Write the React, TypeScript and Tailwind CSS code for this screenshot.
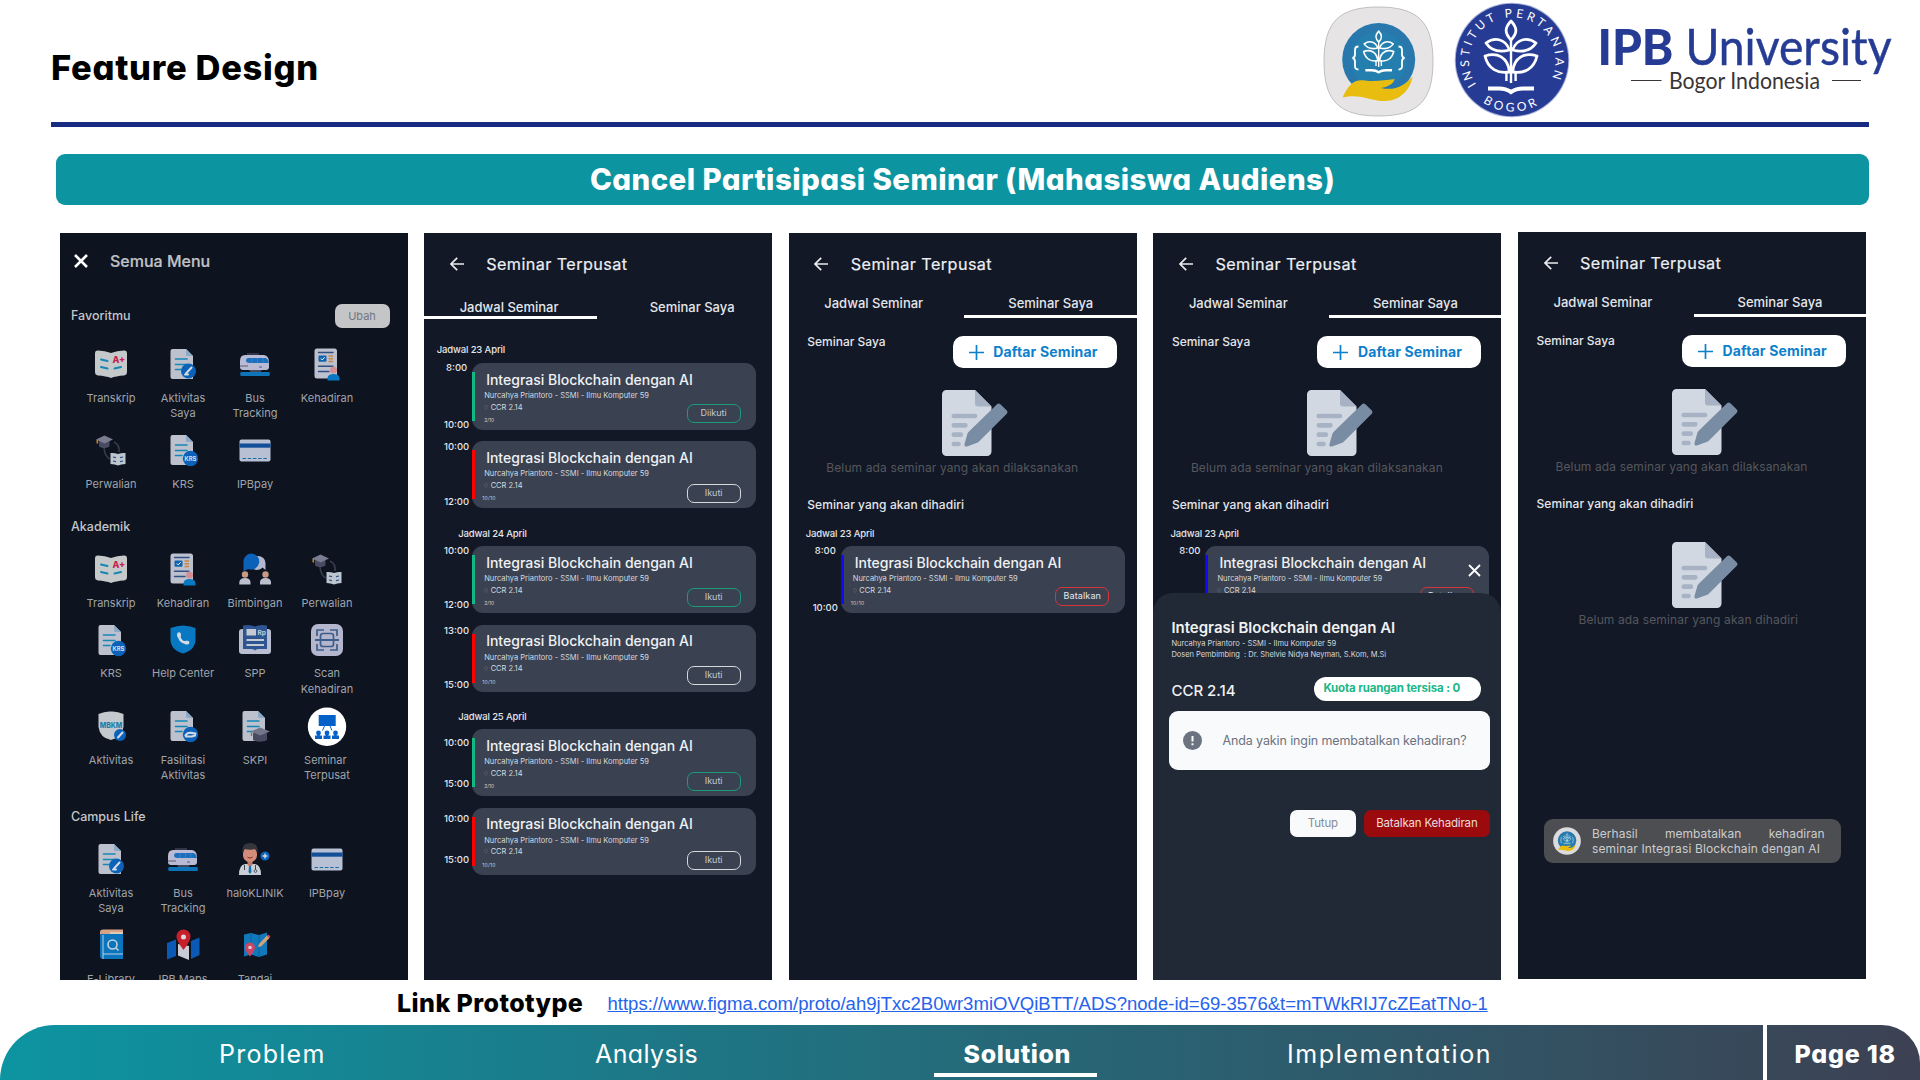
import type { ReactNode } from 'react';

/* ---------- logos ---------- */

function Plant() {
  return (
    <g fill="none" stroke="#fff" strokeWidth={2.8} strokeLinejoin="round">
      <path d="M0-36C-6.500-29-6.500-24 0-17C6.500-24 6.500-29 0-36Z" />
      <path d="M-25-14C-17-20-6-19-1.500-7C-9-5-19-5-25-14Z" />
      <path d="M25-14C17-20 6-19 1.500-7C9-5 19-5 25-14Z" />
      <path d="M-26-1C-14-5-3 0-1.500 15C-13 17-23 12-26-1Z" />
      <path d="M26-1C14-5 3 0 1.500 15C13 17 23 12 26-1Z" />
      <path d="M0-17V26M-4.600 14V24M4.600 14V24" strokeWidth={2.4} />
      <path d="M-23 31.500H-12Q-5 31.500 0 35Q5 31.500 12 31.500H23" strokeWidth={4} strokeLinejoin="miter" />
    </g>
  );
}

function AppEmblem() {
  return (
    <svg className="h-[111px] w-[111px]" viewBox="0 0 111 111">
      <path
        d="M55.500 1C95 1 110 16 110 55.500C110 95 95 110 55.500 110C16 110 1 95 1 55.500C1 16 16 1 55.500 1Z"
        fill="#e6e4e5"
        stroke="#b3b2b4"
        strokeWidth={0.8}
      />
      <EmblemCore />
    </svg>
  );
}

function EmblemCore() {
  return (
    <>
      <circle cx={55.700} cy={53.500} r={36.500} fill="#2878ad" />
      <circle cx={55.700} cy={53.500} r={28} fill="#1f85b0" opacity={0.5} />
      <g transform="translate(55.700 46) scale(.58)">
        <Plant />
      </g>
      <g fill="none" stroke="#fff" strokeWidth={1.8}>
        <path d="M35.500 40.500q-3.500 0-3.500 3.500v4.500q0 3-2.500 3.500q2.500.5 2.500 3.500v4.500q0 3.500 3.500 3.500" />
        <path d="M75.500 40.500q3.500 0 3.500 3.500v4.500q0 3 2.500 3.500q-2.500.5-2.500 3.500v4.500q0 3.500-3.500 3.500" />
      </g>
      <path
        d="M19.500 91.500C26 78 31 73 42 74.500C52 76 62 74 71.500 73C71 78 64 81 58 82C72 85 81 80 89.500 70.500C88 82 78 95 62 95C48 95.500 38 87 19.500 91.500Z"
        fill="#e9bd10"
      />
    </>
  );
}

function InstituteSeal() {
  return (
    <svg className="h-[116px] w-[116px]" viewBox="-58 -58 116 116">
      <defs>
        <path id="sealTop" d="M-35.800 24.500A43.300 43.300 0 1 1 38.600 20.500" />
        <path id="sealBottom" d="M-29 42.500A51.500 51.500 0 0 0 28 43.500" />
      </defs>
      <circle r={57.300} fill="#a9b2db" />
      <circle r={56.300} fill="#263c94" />
      <g transform="translate(-1 -3)">
        <Plant />
      </g>
      <g fill="#fff" fontFamily="Lato, sans-serif" fontSize={12}>
        <text textLength={179} lengthAdjust="spacing">
          <textPath href="#sealTop" textLength={179}>INSTITUT PERTANIAN</textPath>
        </text>
        <text textLength={57}>
          <textPath href="#sealBottom" textLength={57}>BOGOR</textPath>
        </text>
      </g>
    </svg>
  );
}

function UniversityWordmark() {
  return (
    <svg className="h-[82px] w-[300px] overflow-visible" viewBox="0 0 300 82">
      <g fill="#263c94" fontFamily="Lato, sans-serif" fontSize={50}>
        <text x={1.500} y={45} fontWeight={900} textLength={76} lengthAdjust="spacingAndGlyphs">IPB</text>
        <text x={89.500} y={45} textLength={206} lengthAdjust="spacingAndGlyphs" stroke="#263c94" strokeWidth={0.5}>University</text>
      </g>
      <text x={73} y={68.500} fill="#3b3536" fontFamily="Lato, sans-serif" fontSize={22.500} textLength={151} lengthAdjust="spacingAndGlyphs">
        Bogor Indonesia
      </text>
      <path d="M35 60.500H65.500M236 60.500H265" stroke="#3b3536" strokeWidth={1.2} />
    </svg>
  );
}

/* ---------- menu icons ---------- */

function Svg({ children }: { children: ReactNode }) {
  return (
    <svg className="h-8 w-8 overflow-visible" viewBox="0 0 32 32">
      {children}
    </svg>
  );
}

const PAGE = 'M5.500 1H19l7 7v23H5.500a2 2 0 0 1-2-2V3a2 2 0 0 1 2-2Z';

function Sheet({ children }: { children?: ReactNode }) {
  return (
    <Svg>
      <path d={PAGE} fill="#bdc1ce" />
      <path d="M19 1l7 7h-5.500a1.500 1.500 0 0 1-1.500-1.500Z" fill="#8ba9c9" />
      <path d="M8.500 11H20M8.500 16.500H20M8.500 21.500H15" stroke="#1687b5" strokeWidth={1.6} strokeLinecap="round" />
      {children}
    </Svg>
  );
}

function Transkrip() {
  return (
    <Svg>
      <path d="M0 5Q0 2 3 2.500Q10 2.500 16 5Q22 2.500 29 2.500Q32 2 32 5V24Q32 27 29 27.500Q21 28 16 30Q11 28 3 27.500Q0 27 0 24Z" fill="#c6c9ca" />
      <path d="M6 11.500l6.500 1.500M6 19l6.500 1.500M26 19l-6.500 1.500" stroke="#1687b5" strokeWidth={2} strokeLinecap="round" />
      <text x={17.500} y={15} fontSize={9} fontWeight={800} fill="#c91f4b" fontFamily="Inter, sans-serif">A+</text>
    </Svg>
  );
}

function AktivitasSaya() {
  return (
    <Sheet>
      <circle cx={21.500} cy={23} r={7.500} fill="#0b62b8" />
      <path d="M19 25.500l5.500-6M18 26.500h3" stroke="#d5dbe5" strokeWidth={2} strokeLinecap="round" />
    </Sheet>
  );
}

function Bus() {
  return (
    <Svg>
      <rect x={8} y={5} width={12} height={3} fill="#343449" />
      <path d="M6 7H25Q30 8 30 14V19Q30 22 27 22H4Q1 22 1 19V13Q1 7 6 7Z" fill="#b9bbd4" />
      <path d="M9 10H27Q30 12 30 15H11Q7 15 7 12.500Q7 10 9 10Z" fill="#1d6fbd" />
      <path d="M1 18H9M20 19H23" stroke="#595c75" strokeWidth={1} />
      <path d="M13 10V15M18.500 10V15M24 10V15" stroke="#3f8bd0" strokeWidth={0.6} />
      <path d="M10 22l1.500 2h10L23 22Z" fill="#46485f" />
      <rect x={1.300} y={24} width={29.500} height={4} rx={1.300} fill="#0d74b9" />
    </Svg>
  );
}

function Kehadiran() {
  return (
    <Svg>
      <rect x={3.500} y={0.500} width={22.500} height={30} rx={2.500} fill="#bdc1ce" />
      <path d="M7.500 4.500H22M7.500 18.200H22M7.500 23.500H18" stroke="#304f83" strokeWidth={1.4} strokeLinecap="round" />
      <rect x={7.500} y={7.500} width={8} height={6.200} rx={1} fill="#0f65ad" />
      <path d="M9.800 10.500l1.400 1.400 2.400-2.600" stroke="#fff" fill="none" />
      <path d="M17.500 8H22M17.500 10.800H22M17.500 13.500H22" stroke="#ca8546" strokeWidth={1.500} />
      <circle cx={22.500} cy={22} r={3.500} fill="#d28f95" />
      <path d="M16.500 32.500V30Q17 26 22.500 26Q28 26 28.500 30V32.500Z" fill="#0878c2" />
    </Svg>
  );
}

function Perwalian() {
  return (
    <Svg>
      <path d="M9 12Q9 22 15 25M19 8Q25 11 24 18" fill="none" stroke="#393d50" strokeWidth={1.5} />
      <path d="M4 7v5.500q5 3.500 10.500 0V7Z" fill="#474a60" />
      <path d="M1 5.500L9.500 1.500L18 5.500L9.500 9.500Z" fill="#7a7d91" />
      <path d="M2.300 6v3.500" stroke="#c5872e" strokeWidth={1.600} />
      <path d="M15.500 19Q19 18.500 23 20Q27 18.500 30.500 19V30Q26 30 23 31.500Q20 30 15.500 30Z" fill="#bcc6cf" />
      <path d="M18 23l3 .6M18 27l3 .6M28 23l-3 .6M28 27l-3 .6" stroke="#304f83" strokeWidth={1.200} />
    </Svg>
  );
}

function Krs() {
  return (
    <Sheet>
      <circle cx={23.500} cy={24.500} r={7.700} fill="#0b62b8" />
      <text x={23.500} y={26.500} textAnchor="middle" fontSize={5.800} fontWeight={700} fill="#cfe0ee" fontFamily="Inter, sans-serif">KRS</text>
    </Sheet>
  );
}

function Pay() {
  return (
    <Svg>
      <rect x={0.500} y={5.500} width={31} height={22} rx={2} fill="#b8c1d3" />
      <rect x={0.500} y={9.500} width={31} height={4.200} fill="#134f98" />
      <path d="M3.500 24.500H29" stroke="#1a6ca6" strokeWidth={1.200} strokeDasharray="3.500 1.700" />
    </Svg>
  );
}

function Bimbingan() {
  return (
    <Svg>
      <path d="M19 3a7.500 7 0 0 1 7.500 7v7l-3-2.500a7.500 7 0 1 1-4.500-11.500Z" fill="#b4b8cf" />
      <path d="M12 .5a8 8 0 1 1-2.500 15.500L4.500 18V9A8 8 0 0 1 12 .5Z" fill="#0b62b8" />
      <circle cx={6} cy={21.500} r={3.200} fill="#c99a83" />
      <circle cx={26.500} cy={21.500} r={3.200} fill="#c99a83" />
      <path d="M.3 31.500V29Q1 25 6 25Q11 25 11.500 29V31.500ZM21 31.500V29Q21.500 25 26.500 25Q31.500 25 32 29V31.500Z" fill="#bcbfcd" />
    </Svg>
  );
}

function HelpCenter() {
  return (
    <Svg>
      <path d="M3.500 4Q10 1.500 16 1.500Q22 1.500 28.500 4V15Q28.500 26 16 29.500Q3.500 26 3.500 15Z" fill="#0878c2" />
      <path d="M12 10.500Q12 15.500 16 18L20.500 18.800" fill="none" stroke="#d5dbe5" strokeWidth={2.600} strokeLinecap="round" />
      <path d="M12 10.200v1.500M19 18.600h1.500" stroke="#d5dbe5" strokeWidth={3.800} strokeLinecap="round" />
    </Svg>
  );
}

function Spp() {
  return (
    <Svg>
      <path d="M3 5H29Q32 5 32 8V27Q32 30 29 30H3Q0 30 0 27V8Q0 5 3 5Z" fill="#b9bfd0" />
      <path d="M4 1.500Q11 0 16 2.500Q21 0 28 1.500V25H20Q16 25 16 27Q16 25 12 25H4Z" fill="#2d5591" />
      <rect x={7.500} y={5} width={9.500} height={6.500} fill="#c6cad4" />
      <text x={18.500} y={11} fontSize={6.500} fontWeight={700} fill="#c6cad4" fontFamily="Inter, sans-serif">Rp</text>
      <path d="M7.500 16H25M7.500 21H25" stroke="#c6cad4" strokeWidth={2.200} />
    </Svg>
  );
}

function Scan() {
  return (
    <Svg>
      <rect x={0} y={0} width={32} height={32} rx={7} fill="#b4b6cd" />
      <g fill="none" stroke="#3d5d8b" strokeWidth={1.700}>
        <path d="M6 12V6H13M19 6H26V12M26 20V26H19M13 26H6V20" />
        <rect x={9.500} y={9.500} width={13} height={13} rx={2.500} />
        <path d="M4 16H28" strokeWidth={2} />
      </g>
    </Svg>
  );
}

function Mbkm() {
  return (
    <Svg>
      <path d="M3.500 4Q10 1 16 1.500Q22 1 28.500 4V17Q27 28 16 30Q5 28 3.500 17Z" fill="#c3c9cc" />
      <text x={16} y={18} textAnchor="middle" fontSize={8} fontWeight={800} fill="#1782b1" textLength={22.500} lengthAdjust="spacingAndGlyphs" fontFamily="Inter, sans-serif">MBKM</text>
      <circle cx={25} cy={25} r={6} fill="#0b62b8" />
      <path d="M23 27.500l4.500-5" stroke="#d5dbe5" strokeWidth={2} strokeLinecap="round" />
    </Svg>
  );
}

function Fasilitasi() {
  return (
    <Sheet>
      <circle cx={23.500} cy={24.500} r={7.700} fill="#0b62b8" />
      <path d="M18.500 25.500Q20 22.500 24 22.800L28.500 23.500M19 26.500H25L28 25.500" fill="none" stroke="#d3d9e4" strokeWidth={2.200} strokeLinecap="round" />
    </Sheet>
  );
}

function Skpi() {
  return (
    <Sheet>
      <path d="M14 23v7q7 3.500 14 0V23Z" fill="#474a60" />
      <path d="M12 21.500L21 17.500L31 21.500L21 25.500Z" fill="#737688" />
      <path d="M12.500 22.500v3.500" stroke="#8d6a42" strokeWidth={1.300} />
    </Sheet>
  );
}

function SeminarTerpusatIcon() {
  return (
    <svg className="-m-1 h-10 w-10" viewBox="0 0 40 40">
      <circle cx={20} cy={20.700} r={19.200} fill="#fff" />
      <g fill="#0560c8">
        <rect x={11.700} y={9} width={17} height={11} />
        <path d="M17.500 20l-2 4.500M23 20l2 4.500" stroke="#0560c8" />
        {[11.500, 20, 28.500].map((x) => (
          <g key={x}>
            <circle cx={x} cy={27} r={2.400} />
            <path d={`M${x - 3.500} 33v-3.500h2l1.500-1.500l1.500 1.500h2v3.500Z`} />
          </g>
        ))}
      </g>
    </svg>
  );
}

function HaloKlinik() {
  return (
    <Svg>
      <path d="M0 32Q0 22 6 21H16Q22 22 22 32Z" fill="#c8cfd5" />
      <path d="M8.500 17h5v5l-2.500 2l-2.500-2Z" fill="#c17a68" />
      <rect x={4} y={4} width={14} height={15} rx={6.500} fill="#d28c7a" />
      <path d="M3.500 10V6Q4 0 11 0Q18 0 18.500 6V10L16.500 6Q11 7.500 5.500 6Z" fill="#35363b" />
      <path d="M8.500 14q2.500 2.500 5 0" stroke="#8a2e2e" fill="none" />
      <path d="M5.500 22v5M16.500 22v5" stroke="#414655" />
      <path d="M10 23h2l.5 6L11 31l-1.500-2Z" fill="#1972ad" />
      <circle cx={16.500} cy={28} r={1.400} fill="none" stroke="#414655" strokeWidth={0.8} />
      <circle cx={26} cy={13} r={4.600} fill="#0b62b8" />
      <path d="M26 10.500v5M23.500 13h5" stroke="#d5dbe5" strokeWidth={1.400} />
    </Svg>
  );
}

function ELibrary() {
  return (
    <Svg>
      <path d="M5 3Q5 .5 8 .5H28V6H5Z" fill="#d8a287" />
      <path d="M15 4H28" stroke="#e0c8b7" strokeWidth={2} />
      <path d="M5 5H28V30H8Q5 30 5 27Z" fill="#0a75bd" />
      <path d="M8 6V30M8 25H28" stroke="#b9d0e0" strokeWidth={1} />
      <circle cx={17.500} cy={15.500} r={4.500} fill="none" stroke="#c6cfdb" strokeWidth={1.600} />
      <path d="M21 19l2.500 2.500" stroke="#c6cfdb" strokeWidth={1.600} />
    </Svg>
  );
}

function IpbMaps() {
  return (
    <Svg>
      <path d="M0 14l9-3.500V27L0 30.500Z" fill="#0b59b5" />
      <path d="M24 12l8.500-3.500V26L24 30Z" fill="#0b59b5" />
      <path d="M11 15l11 2V31L11 26.500Z" fill="#c9ccd6" />
      <path d="M16.500 21Q9.500 12 9.500 7.500a7 7 0 0 1 14 0Q23.500 12 16.500 21Z" fill="#c8202b" />
      <circle cx={16.500} cy={8} r={2.500} fill="#d9d9de" />
    </Svg>
  );
}

function Tandai() {
  return (
    <Svg>
      <path d="M5 5.500L12 4L20 6L28 3.500V25.500L20 28L12 25.500L5 27.500Z" fill="#1179bb" />
      <path d="M12 4V25.500M20 6V28" stroke="#0c659f" />
      <path d="M20 15l8-8.500l2.500 2.500l-8.500 8.500l-3 .5Z" fill="#d2a374" />
      <path d="M28 6.500l1.500-1l2 2l-1 1.500Z" fill="#cc4661" />
      <path d="M11 27.500Q6 21.500 6 18.500a5 5 0 0 1 10 0Q16 21.500 11 27.500Z" fill="#cc4661" />
      <circle cx={11} cy={18.500} r={1.800} fill="#e0cfd5" />
    </Svg>
  );
}

/* ---------- panel 1: menu ---------- */

type Tile = { icon: ReactNode; lines: string[]; left?: boolean };

function TileGrid({ tiles }: { tiles: Tile[] }) {
  return (
    <div className="ml-[15.500px] grid w-[288px] grid-cols-4 gap-y-[12.600px]">
      {tiles.map((t, i) => (
        <div key={i} className="flex flex-col items-center">
          <div className="h-8 w-8">{t.icon}</div>
          <div
            className={
              t.left
                ? 'mt-[10.900px] text-left text-[11px] leading-[15.300px] whitespace-nowrap text-[#a0a4ab]'
                : 'mt-[10.900px] text-center text-[11px] leading-[15.300px] whitespace-nowrap text-[#a0a4ab]'
            }
          >
            {t.lines.map((l) => (
              <div key={l}>{l}</div>
            ))}
          </div>
        </div>
      ))}
    </div>
  );
}

const favourites: Tile[] = [
  { icon: <Transkrip />, lines: ['Transkrip'] },
  { icon: <AktivitasSaya />, lines: ['Aktivitas', 'Saya'] },
  { icon: <Bus />, lines: ['Bus', 'Tracking'] },
  { icon: <Kehadiran />, lines: ['Kehadiran'] },
  { icon: <Perwalian />, lines: ['Perwalian'] },
  { icon: <Krs />, lines: ['KRS'] },
  { icon: <Pay />, lines: ['IPBpay'] },
];

const academic: Tile[] = [
  { icon: <Transkrip />, lines: ['Transkrip'] },
  { icon: <Kehadiran />, lines: ['Kehadiran'] },
  { icon: <Bimbingan />, lines: ['Bimbingan'] },
  { icon: <Perwalian />, lines: ['Perwalian'] },
  { icon: <Krs />, lines: ['KRS'] },
  { icon: <HelpCenter />, lines: ['Help Center'] },
  { icon: <Spp />, lines: ['SPP'] },
  { icon: <Scan />, lines: ['Scan', 'Kehadiran'] },
  { icon: <Mbkm />, lines: ['Aktivitas'] },
  { icon: <Fasilitasi />, lines: ['Fasilitasi', 'Aktivitas'] },
  { icon: <Skpi />, lines: ['SKPI'] },
  { icon: <SeminarTerpusatIcon />, lines: ['Seminar', 'Terpusat'], left: true },
];

const campus: Tile[] = [
  { icon: <AktivitasSaya />, lines: ['Aktivitas', 'Saya'] },
  { icon: <Bus />, lines: ['Bus', 'Tracking'] },
  { icon: <HaloKlinik />, lines: ['haloKLINIK'] },
  { icon: <Pay />, lines: ['IPBpay'] },
  { icon: <ELibrary />, lines: ['E-Library'] },
  { icon: <IpbMaps />, lines: ['IPB Maps'] },
  { icon: <Tandai />, lines: ['Tandai'] },
];

function Phone({ children, className }: { children: ReactNode; className: string }) {
  return (
    <section className={`relative h-[747px] w-[348px] shrink-0 overflow-hidden font-['Inter',sans-serif] ${className}`}>
      {children}
    </section>
  );
}

function MenuPhone() {
  const heading = 'flex h-6 items-center pl-[11.500px] text-[12.500px] font-medium text-[#c3c6ca]';
  return (
    <Phone className="mt-px bg-[#0d131f]">
      <div className="mt-[17px] flex h-[22px] items-center">
        <svg className="ml-[14.500px] h-[14px] w-[14px]" viewBox="0 0 14 14">
          <path d="M1 1L13 13M13 1L1 13" stroke="#fff" strokeWidth={2.600} />
        </svg>
        <h2 className="ml-[22px] text-[16px] font-medium text-[#c0c2c6] [-webkit-text-stroke:0.200px]">Semua Menu</h2>
      </div>
      <div className="mt-[32px] flex items-center justify-between">
        <h3 className={heading}>Favoritmu</h3>
        <button className="mr-[18px] h-6 w-[55px] rounded-[7px] bg-[#c4c5c7] text-[11px] text-[#727680]">Ubah</button>
      </div>
      <div className="mt-[20px]">
        <TileGrid tiles={favourites} />
      </div>
      <h3 className={`mt-[23.500px] ${heading}`}>Akademik</h3>
      <div className="mt-[13px]">
        <TileGrid tiles={academic} />
      </div>
      <h3 className={`mt-[22.500px] ${heading}`}>Campus Life</h3>
      <div className="mt-[13.500px]">
        <TileGrid tiles={campus} />
      </div>
    </Phone>
  );
}

/* ---------- seminar screens ---------- */

function Header() {
  return (
    <div className="mt-[20.500px] flex h-[21.500px] items-center">
      <svg className="ml-[25.500px] h-[14px] w-[14px]" viewBox="0 0 14 14">
        <path d="M14 7H1.200M7.200.8L1 7L7.200 13.200" fill="none" stroke="#e9ebee" strokeWidth={1.700} />
      </svg>
      <h2 className="mb-px ml-[22.500px] text-[16.200px] leading-[20px] tracking-[0.420px] whitespace-nowrap text-[#eceef1] [-webkit-text-stroke:0.200px]">
        Seminar Terpusat
      </h2>
    </div>
  );
}

function Tabs({ active }: { active: 'jadwal' | 'saya' }) {
  const first = active === 'jadwal';
  return (
    <div className="flex h-[43px] flex-col justify-between text-[13px] leading-[17px] font-medium text-[#e4e6ea]">
      <div className={first ? 'flex pt-[24px] pl-[35.500px]' : 'flex pt-[19.500px] pl-[35.500px]'}>
        <span className={first ? 'w-[190px]' : 'w-[184px]'}>Jadwal Seminar</span>
        <span>Seminar Saya</span>
      </div>
      <div className={first ? 'h-[3px] w-[173px] shrink-0 bg-white' : 'ml-[175.500px] h-[3px] shrink-0 bg-white'} />
    </div>
  );
}

type Slot = {
  from: string;
  to: string;
  timePos: string;
  bar: string;
  quota: string;
  action: string;
  actionPos: string;
  actionLook: string;
};

function SeminarRow({ slot, indent }: { slot: Slot; indent: string }) {
  return (
    <div className={`flex h-[67px] ${indent}`}>
      <div className={`flex w-[31px] flex-col text-center text-[9.500px] leading-[12px] font-medium text-[#e4e6ea] ${slot.timePos}`}>
        <span>{slot.from}</span>
        <span>{slot.to}</span>
      </div>
      <div className="flex w-[284px] rounded-[11px] bg-[#3a4252]">
        <div className={`mt-[9px] h-[49px] w-[3px] ${slot.bar}`} />
        <div className="flex-1 whitespace-nowrap">
          <div className="mt-[7.500px] pl-[11px] text-[14px] leading-[18px] font-medium text-[#f0f1f3]">
            Integrasi Blockchain dengan AI
          </div>
          <div className="flex justify-between text-[7.500px] text-[#d6d9de]">
            <div className="pl-[9px]">
              <div className="mt-[2.500px] leading-[9px]">Nurcahya Priantoro - SSMI - Ilmu Komputer 59</div>
              <div className="mt-[2.500px] flex items-center gap-[2.500px] leading-[9px]">
                <svg className="h-[5px] w-[4px]" viewBox="0 0 4 5">
                  <path d="M2 .4a1.500 1.500 0 0 1 1.500 1.500Q3.500 3 2 4.700Q.5 3 .5 1.900A1.500 1.500 0 0 1 2 .4Z" fill="none" stroke="#5c6576" strokeWidth={0.600} />
                </svg>
                <span>CCR 2.14</span>
              </div>
              <div className={slot.quota === '2/10' ? 'mt-[4.500px] text-[5px] leading-[8px] text-[#cdd1d8]' : 'mt-[4.500px] -ml-[2px] text-[5px] leading-[8px] tracking-[0.300px] text-[#cdd1d8]'}>
                {slot.quota}
              </div>
            </div>
            <button className={`mr-[15.500px] h-[19px] w-[54px] rounded-[7px] border text-[9px] leading-[15.500px] ${slot.actionPos} ${slot.actionLook}`}>
              <span className="block h-[17px]">{slot.action}</span>
            </button>
          </div>
        </div>
      </div>
    </div>
  );
}

const GREEN = { bar: 'bg-[#12b886]', quota: '2/10', actionLook: 'border-[#1a9c78] text-[#c3c8cf]' };
const RED = { bar: 'bg-[#ff0000]', quota: '10/10', actionLook: 'border-[#d5d8dc] text-[#c3c8cf]' };

const days: { label: string; labelPos: string; slots: { slot: Slot; gap: string }[] }[] = [
  {
    label: 'Jadwal 23 April',
    labelPos: 'mt-[26px] pl-[12.500px] mb-[7px]',
    slots: [
      { gap: '', slot: { from: '8:00', to: '10:00', timePos: '-mt-[1.500px] gap-[45px]', action: 'Diikuti', actionPos: 'mt-[15.500px]', ...GREEN } },
      { gap: 'mt-[11px]', slot: { from: '10:00', to: '12:00', timePos: 'mt-0 gap-[42.500px]', action: 'Ikuti', actionPos: 'mt-[17px]', ...RED } },
    ],
  },
  {
    label: 'Jadwal 24 April',
    labelPos: 'mt-[19.500px] pl-[34px] mb-[6.500px]',
    slots: [
      { gap: '', slot: { from: '10:00', to: '12:00', timePos: '-mt-px gap-[42px]', action: 'Ikuti', actionPos: 'mt-[16.500px]', ...GREEN } },
      { gap: 'mt-[11.500px]', slot: { from: '13:00', to: '15:00', timePos: 'mt-0 gap-[42px]', action: 'Ikuti', actionPos: 'mt-[16px]', ...RED } },
    ],
  },
  {
    label: 'Jadwal 25 April',
    labelPos: 'mt-[19px] pl-[34px] mb-[6.500px]',
    slots: [
      { gap: '', slot: { from: '10:00', to: '15:00', timePos: 'mt-[7.500px] gap-[29px]', action: 'Ikuti', actionPos: 'mt-[17px]', ...GREEN } },
      { gap: 'mt-[11.500px]', slot: { from: '10:00', to: '15:00', timePos: 'mt-[5.500px] gap-[29px]', action: 'Ikuti', actionPos: 'mt-[17.500px]', ...RED } },
    ],
  },
];

const attended: Slot = {
  from: '8:00',
  to: '10:00',
  timePos: '-mt-px gap-[45px]',
  bar: 'bg-[#1008fb]',
  quota: '10/10',
  action: 'Batalkan',
  actionPos: 'mt-[15.500px]',
  actionLook: 'border-[#d63438] text-[#e6e8eb] tracking-[0.150px]',
};

const dateLabel = 'text-[9.500px] leading-[12px] tracking-[-0.130px] font-medium text-[#e4e6ea]';

function SchedulePhone() {
  return (
    <Phone className="mt-px bg-[#121826]">
      <Header />
      <Tabs active="jadwal" />
      {days.map((d) => (
        <div key={d.label}>
          <div className={`${dateLabel} ${d.labelPos}`}>{d.label}</div>
          {d.slots.map((s, i) => (
            <div key={i} className={s.gap}>
              <SeminarRow slot={s.slot} indent="pl-[17px]" />
            </div>
          ))}
        </div>
      ))}
    </Phone>
  );
}

function EmptyDoc() {
  return (
    <svg className="block h-[66px] w-[67px]" viewBox="0 0 67 66">
      <path d="M4.500 0H33L49.500 16.500V61.500a4.500 4.500 0 0 1-4.500 4.500H4.500A4.500 4.500 0 0 1 0 61.500V4.500A4.500 4.500 0 0 1 4.500 0Z" fill="#d2d8e1" />
      <path d="M33 0L49.500 16.500H36a3 3 0 0 1-3-3Z" fill="#a8b2c5" />
      <path d="M11.800 26H33M11.800 35.300H23.300M11.800 44.700H18.800M11.800 54H16.500" stroke="#a8b2c5" strokeWidth={4.700} strokeLinecap="round" />
      <path d="M55 14.200Q56.700 12.700 58.400 14.200L64.800 20.600Q66.300 22.200 64.800 23.800L37 51.500Q36 52.500 34.500 53L25 56.500Q22 57 22.500 54L25.500 43.500Q26 42.500 27 41.500Z" fill="#788ca3" />
    </svg>
  );
}

function MySeminars({ children }: { children?: ReactNode }) {
  return (
    <>
      <Header />
      <Tabs active="saya" />
      <div className="mt-[18px] flex justify-between pr-[20px] pl-[18.500px]">
        <span className="h-[11px] text-[12px] leading-[11px] font-medium text-[#e4e6ea]">Seminar Saya</span>
        <button className="flex h-[32px] w-[164px] items-center rounded-[10px] bg-white pl-[16px] text-[#0d80cc]">
          <svg className="h-[15px] w-[15px]" viewBox="0 0 15 15">
            <path d="M7.500 0V15M0 7.500H15" stroke="#0d80cc" strokeWidth={1.700} />
          </svg>
          <span className="ml-[9.500px] text-[14px] leading-[18px] font-bold tracking-[0.150px] whitespace-nowrap">Daftar Seminar</span>
        </button>
      </div>
      <div className="mt-[21.500px] pl-[153.500px]">
        <EmptyDoc />
      </div>
      <p className="mt-[4px] pl-[37.500px] text-[12px] leading-[16px] tracking-[0.125px] whitespace-nowrap text-[#55575c]">
        Belum ada seminar yang akan dilaksanakan
      </p>
      <h3 className="mt-[21.500px] pl-[18.500px] text-[12px] leading-[16px] font-medium tracking-[0.060px] text-[#e4e6ea]">
        Seminar yang akan dihadiri
      </h3>
      {children}
    </>
  );
}

function AttendedList() {
  return (
    <>
      <div className={`mt-[14.500px] mb-[6.500px] pl-[17px] ${dateLabel}`}>Jadwal 23 April</div>
      <SeminarRow slot={attended} indent="pl-[21px]" />
    </>
  );
}

function CancelSheet() {
  return (
    <div className="absolute inset-x-0 bottom-0 h-[387px] rounded-t-[20px] bg-[#212936] pr-[11.500px] pl-[16px]">
      <svg className="absolute -top-[29px] right-[20px] h-[13px] w-[13px]" viewBox="0 0 13 13">
        <path d="M1 1L12 12M12 1L1 12" stroke="#fff" strokeWidth={1.800} />
      </svg>
      <div className="pl-[2px]">
        <h3 className="pt-[25px] text-[15px] leading-[19px] font-semibold text-[#f0f1f3]">Integrasi Blockchain dengan AI</h3>
        <p className="mt-[1px] text-[7.500px] leading-[11px] text-[#d6d9de]">Nurcahya Priantoro - SSMI - Ilmu Komputer 59</p>
        <p className="text-[7.500px] leading-[11px] tracking-[-0.025px] whitespace-pre text-[#d6d9de]">{'Dosen Pembimbing  : Dr. Shelvie Nidya Neyman, S.Kom, M.Si'}</p>
      </div>
      <div className="mt-[17px] flex h-6 justify-between pr-[9px] pl-[2px]">
        <span className="mt-[4px] text-[15px] leading-[20px] font-medium text-[#f0f1f3]">CCR 2.14</span>
        <span className="w-[167px] rounded-full bg-white pl-[9.500px] text-[11.500px] leading-[23px] font-bold tracking-[-0.160px] text-[#1db789]">
          Kuota ruangan tersisa : 0
        </span>
      </div>
      <div className="mt-[10px] flex h-[59px] items-center rounded-[9px] bg-[#f9fafc]">
        <svg className="ml-[14px] h-[19px] w-[19px]" viewBox="0 0 19 19">
          <circle cx={9.500} cy={9.500} r={9.500} fill="#6b7280" />
          <path d="M9.500 5V10.500M9.500 12.300V14.300" stroke="#f9fafc" strokeWidth={2} />
        </svg>
        <span className="mt-px ml-[20px] text-[12.500px] tracking-[-0.110px] whitespace-nowrap text-[#6b7280]">
          Anda yakin ingin membatalkan kehadiran?
        </span>
      </div>
      <div className="mt-[40px] flex justify-end gap-[8px]">
        <button className="h-[27px] w-[66px] rounded-[7px] bg-[#f9fafc] text-[11.500px] tracking-[-0.150px] text-[#878c97]">Tutup</button>
        <button className="h-[27px] w-[126px] rounded-[7px] bg-[#9b0a0c] text-[11.500px] tracking-[-0.180px] whitespace-nowrap text-[#ecdcdd]">
          Batalkan Kehadiran
        </button>
      </div>
    </div>
  );
}

function Toast() {
  return (
    <div className="absolute top-[587px] left-[26px] flex h-[44px] w-[296.500px] items-center rounded-[9px] bg-[#4d4e52] pl-[9px]">
      <svg className="h-[28px] w-[28px] shrink-0" viewBox="0 0 111 111">
        <circle cx={55.500} cy={55.500} r={55} fill="#dcdcde" />
        <EmblemCore />
      </svg>
      <div className="ml-[11px] w-[232.500px] text-[12px] leading-[15px] text-[#cbccce]">
        <div className="flex justify-between">
          <span>Berhasil</span>
          <span>membatalkan</span>
          <span>kehadiran</span>
        </div>
        <div className="tracking-[0.118px] whitespace-nowrap">seminar Integrasi Blockchain dengan AI</div>
      </div>
    </div>
  );
}

/* ---------- slide ---------- */

export default function App() {
  return (
    <main className="flex h-[1080px] w-[1920px] flex-col overflow-hidden bg-white font-['Inter',sans-serif]">
      <header className="ml-[51px] flex h-[127px] w-[1818px] justify-between border-b-[5px] border-[#172b80]">
        <h1 className="mt-[46px] text-[34.500px] leading-[44px] font-extrabold tracking-[0.700px] whitespace-nowrap text-black [font-feature-settings:'cv11']">
          Feature Design
        </h1>
        <div className="-mr-[26.500px] flex">
          <div className="mt-[6px]"><AppEmblem /></div>
          <div className="mt-[2px] ml-[20.500px]"><InstituteSeal /></div>
          <div className="mt-[20px] ml-[25.500px]"><UniversityWordmark /></div>
        </div>
      </header>

      <div className="mt-[26.500px] ml-[56px] h-[51.500px] w-[1813px] shrink-0 rounded-[9px] bg-[#0d94a1] text-center text-[29.500px] leading-[51px] font-extrabold tracking-[0.420px] text-white [font-feature-settings:'cv11']">
        Cancel Partisipasi Seminar (Mahasiswa Audiens)
      </div>

      <div className="mt-[27px] ml-[59.500px] flex h-[748px] w-[1806.500px] shrink-0 justify-between">
        <MenuPhone />
        <SchedulePhone />
        <Phone className="mt-px bg-[#121826]">
          <MySeminars>
            <AttendedList />
          </MySeminars>
        </Phone>
        <Phone className="mt-px bg-[#121826]">
          <MySeminars>
            <AttendedList />
          </MySeminars>
          <CancelSheet />
        </Phone>
        <Phone className="bg-[#121826]">
          <MySeminars>
            <div className="mt-[30px] pl-[153.500px]">
              <EmptyDoc />
            </div>
            <p className="mt-[4px] pl-[60.500px] text-[12px] leading-[16px] tracking-[0.125px] whitespace-nowrap text-[#55575c]">
              Belum ada seminar yang akan dihadiri
            </p>
          </MySeminars>
          <Toast />
        </Phone>
      </div>

      <div className="flex h-[45px] shrink-0 items-center pt-[3px] pl-[397px] whitespace-nowrap">
        <span className="w-[186px] text-[25px] font-extrabold tracking-[0.430px] text-black [font-feature-settings:'cv11']">Link Prototype</span>
        <a className="ml-[24.500px] font-['Liberation_Sans',sans-serif] text-[18.560px] text-[#2563eb] underline">
          https://www.figma.com/proto/ah9jTxc2B0wr3miOVQiBTT/ADS?node-id=69-3576&amp;t=mTWkRIJ7cZEatTNo-1
        </a>
      </div>

      <footer className="flex h-[55px] shrink-0 rounded-tl-[55px] rounded-tr-[38px] bg-linear-to-r/srgb from-[#0d94a1] to-[#3c4153] text-[25px] leading-[30px] text-white [font-feature-settings:'cv11']">
        <nav className="flex w-[1763px] pt-[14px] pl-[219px]">
          <span className="w-[376px] tracking-[1.250px]">Problem</span>
          <span className="w-[338.500px] tracking-[0.400px]">Analysis</span>
          <span className="flex w-[163.500px] flex-col items-center font-extrabold tracking-[0.550px]">
            <span className="pl-[4px]">Solution</span>
            <span className="mt-[4px] h-[4px] w-full shrink-0 bg-white" />
          </span>
          <span className="ml-[190px] tracking-[1.580px]">Implementation</span>
        </nav>
        <div className="w-[4px] bg-white" />
        <div className="pt-[14px] pl-[27.500px] font-extrabold tracking-[0.750px]">Page 18</div>
      </footer>
    </main>
  );
}
